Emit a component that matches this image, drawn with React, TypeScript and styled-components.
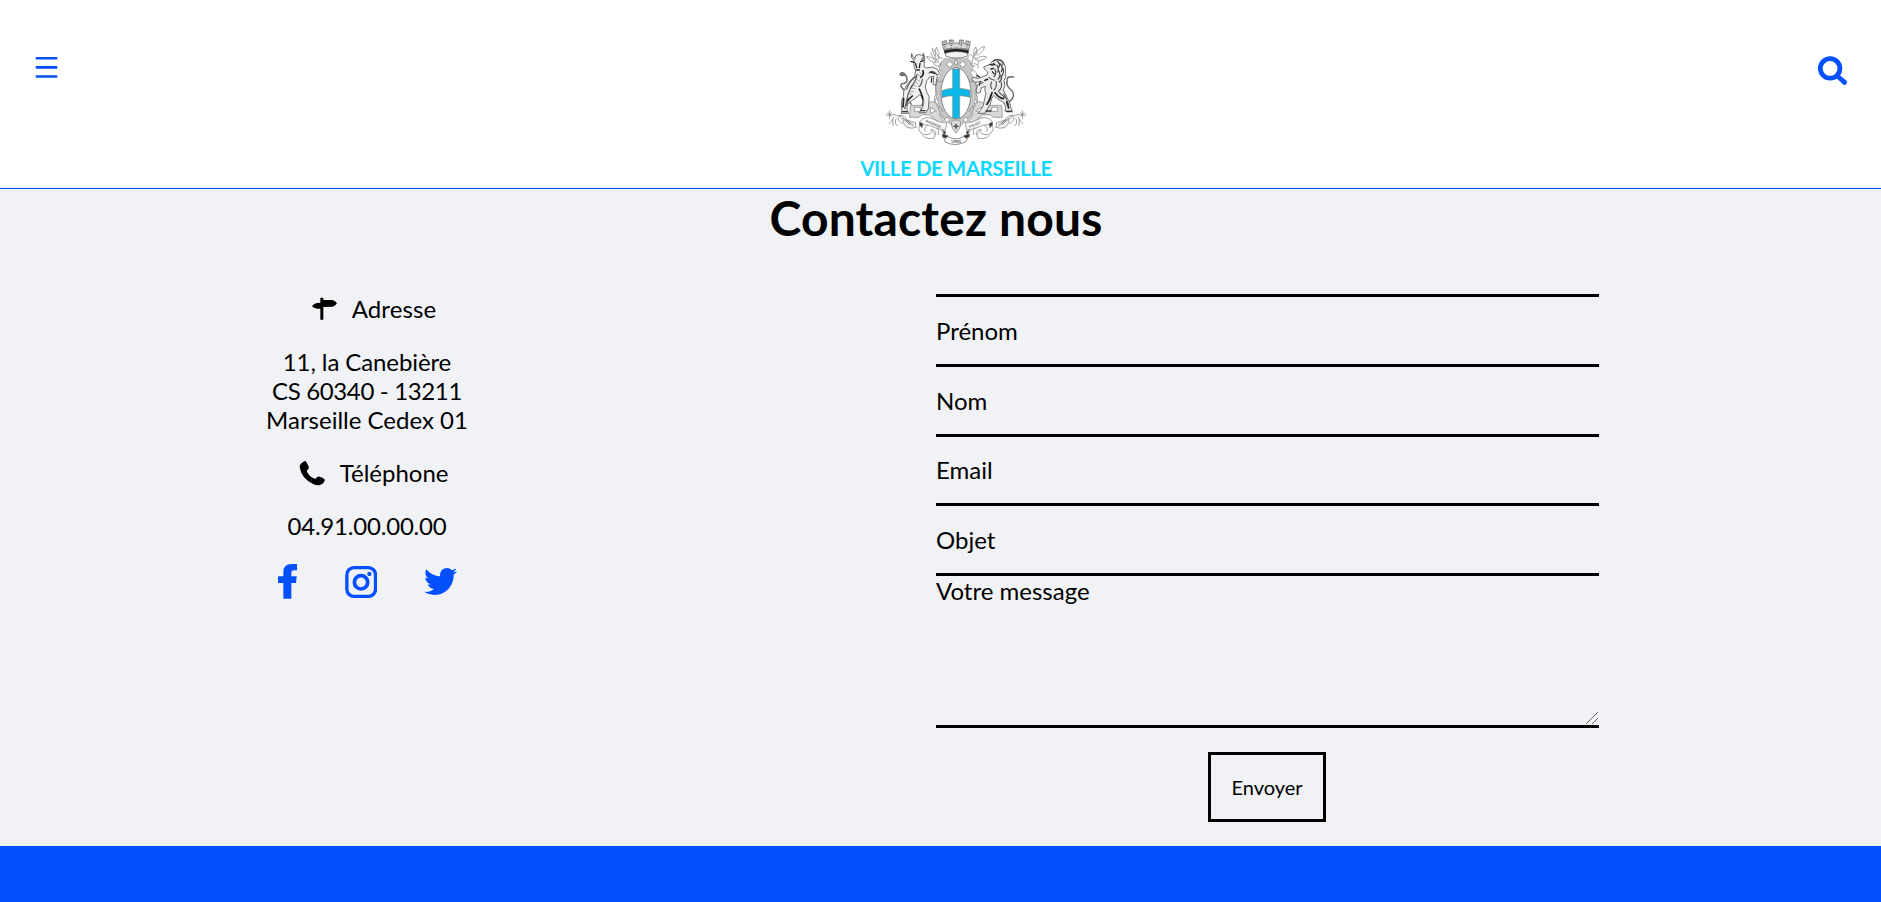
import React from "react";
import styled, { createGlobalStyle } from "styled-components";
import { FaTwitter } from "react-icons/fa";

const BLUE = "#0450ff";

const GlobalStyle = createGlobalStyle`
  * { box-sizing: border-box; }
  body { margin: 0; background: #f0f2f6; color: #000; font-family: Lato, "Liberation Sans", sans-serif; overflow: hidden; }
  svg { display: block; }
`;

const Page = styled.div`
  display: flex;
  flex-direction: column;
  height: 902px;
`;

const Header = styled.header`
  display: flex;
  justify-content: space-between;
  height: 189px;
  padding: 38px 33px 0 35px;
  background: #fff;
  border-bottom: 1px solid ${BLUE};
`;

const IconButton = styled.button<{ $top: number }>`
  align-self: flex-start;
  margin: ${(p) => p.$top}px 0 0;
  padding: 0;
  border: 0;
  background: none;
  cursor: pointer;
`;

const Brand = styled.div`
  display: flex;
  flex-direction: column;
  align-items: center;
  margin-left: 36px;
`;

const BrandName = styled.span`
  margin-top: 10px;
  font-size: 20.5px;
  font-weight: 700;
  line-height: 24px;
  letter-spacing: -0.46px;
  white-space: nowrap;
  color: #0bd8ff;
`;

const Main = styled.main`
  width: 1872px;
  flex: 1;
`;

const Title = styled.h1`
  margin: 0;
  height: 105px;
  font-size: 48px;
  font-weight: 700;
  line-height: 58px;
  letter-spacing: 0.16px;
  text-align: center;
`;

const Columns = styled.div`
  display: grid;
  grid-template-columns: 734px 663px;
  column-gap: 202px;
`;

const Info = styled.section`
  display: flex;
  flex-direction: column;
  align-items: center;
  gap: 24px;
  font-size: 24px;
  line-height: 29px;
  text-align: center;
`;

const InfoHeading = styled.div`
  display: flex;
  align-items: center;
  gap: 15px;
  margin-left: 14px;
`;

const Text = styled.p`
  margin: 0;
`;

const Line = styled.span<{ $tracking?: number }>`
  display: block;
  letter-spacing: ${(p) => p.$tracking ?? 0}px;
`;

const Socials = styled.nav`
  display: flex;
  align-items: center;
  gap: 47.5px;
  margin-left: 1px;
`;

const SocialLink = styled.a`
  color: ${BLUE};
`;

const Form = styled.form`
  display: flex;
  flex-direction: column;
  border-top: 3px solid #000;
`;

const Input = styled.input`
  height: 69.75px;
  padding: 0;
  border: 0;
  border-bottom: 3px solid #000;
  border-radius: 0;
  outline: 0;
  background: transparent;
  font: 24px Lato, sans-serif;
  &::placeholder { color: #000; opacity: 1; }
`;

const MessageBox = styled.div`
  position: relative;
  display: flex;
  height: 152px;
  border-bottom: 3px solid #000;
`;

const Message = styled.textarea`
  flex: 1;
  padding: 0;
  border: 0;
  outline: 0;
  background: transparent;
  font: 24px Lato, sans-serif;
  resize: none;
  &::placeholder { color: #000; opacity: 1; }
`;

const Grip = styled.svg`
  position: absolute;
  right: 1px;
  bottom: 1px;
`;

const Submit = styled.button`
  align-self: center;
  width: 118px;
  height: 70px;
  margin: 24px 1px 0 0;
  padding: 0;
  border: 3px solid #000;
  background: transparent;
  color: #000;
  font: 20px Lato, sans-serif;
`;

const Footer = styled.footer`
  height: 56px;
  background: ${BLUE};
`;

const Flourish = () => (
  <g fill="none" stroke="#8b8b8b" strokeWidth="2.4">
    <path d="M278 88q-18-10-26 4t8 18q14 2 12-10M270 122q-22 6-14 24t22 8M262 150q-10 22-4 40M262 192q-16 12-6 28M257 208q-14 22 12 24l10 16" />
    <path d="M180 228h45l20-12 13 6 12 30 14 18-15 13-32-26-22-1-10 8h-27z" fill="#d8d8d8" />
    <path d="M192 234h18v12h-18zM240 234l18 10-18 8zM265 252l10 18" fill="#fff" />
    <path d="M106 256h24m-12-13v27m-6-21 12 13m0-13-12 13M128 255l24 7M130 263q-6 18-15 20m13-15 0 22m10-24q-8 20 5 23m0-27q2 18 15 20" />
    <path d="M147 257q18 2 22 15l26 8 3 14q-26 8-36-8-2-15-15-29z" fill="#eee" />
    <path d="M208 277q17-19 38-9 22 13 43 13l-4 21q-26-1-47-14-16-4-29 1z" fill="#fafafa" />
    <path d="M208 288q-9 20 14 28 25 1 20-16 18 15 9 27-25 4-35-10M232 287q-13 8-8 20M246 301q15 4 9 16M260 293q9 13 3 24M273 302l9 13" />
    <path d="M166 269l23 20M157 266l22 20" strokeWidth="3" stroke="#777" />
    <path d="m278 302 9 6-6 11z" fill="#333" />
    <path d="m208 278 10 5-3 12-8-9z" fill="#333" />
  </g>
);

const Bull = () => (
  <g strokeLinejoin="round" strokeLinecap="round">
    <path d="M183 224q-16-12-15-28-4-14-14-22-6-8 2-11 16 0 14-16-2-11-18-15M150 132q9-4 14 3-7 6-14 1z" fill="none" stroke="#6a6a6a" strokeWidth="4.5" />
    <path d="M190 96q-1 18 6 27l-3 18q-15 12-26 30-9 13-8 30l-5 14q-3 16 1 28l-3 9h23l-5-10q-2-12 5-22l19-12 14-12 11 12q4 12-1 22l-6 14-6 6h21l7-12 2-26q3-10-6-22l-5-17q1-20 13-30l12-2-2 24 8 3 5-29q-5-12-18-10l-8 2q6-8 16-4l12 10 5-5-9-14q-14-8-30-2l-8-4 1-16q4-13-4-17-13-6-20-2z" fill="#f0f0f0" stroke="#5a5a5a" strokeWidth="2.6" />
    <path d="M189 92q-10-8-5-19 1 11 11 14M213 90q11-6 5-19 9 12-2 22" fill="#ddd" stroke="#555" strokeWidth="2.6" />
    <path d="M182 97l11 2M211 97l8-3M196 103l3 12M209 102l-2 13M199 122h8" fill="none" stroke="#222" strokeWidth="4" />
    <path d="M196 142q-21 16-27 38M188 166q-14 20-17 38l-8 34M200 136q-2 18-19 38M216 150q-2 16-10 22M176 206l-8 22M217 200q2 16-2 28" fill="none" stroke="#555" strokeWidth="3.4" />
    <path d="M160 208l-2 25M186 200l-14 13M207 179q8 16 10 30M218 124q4 12-7 20" fill="none" stroke="#222" strokeWidth="5" />
    <path d="M240 128l14 5M244 146l-1 12M157 247h14M212 244h12" fill="none" stroke="#333" strokeWidth="4" />
    <path d="M198 150l10 5M193 158l10 5M188 167l10 4M182 176l12 2M178 186l12 1M173 194l12 0M207 128l7 5M203 136l10 4" fill="none" stroke="#888" strokeWidth="2" />
  </g>
);

const Lion = () => (
  <g strokeLinejoin="round" strokeLinecap="round">
    <path d="M462 222q18-2 26-18 6-15-12-28-10-12-5-22M470 150q2-10 20-7" fill="none" stroke="#6a6a6a" strokeWidth="4.5" />
    <path d="M420 104l8-10 14-4q16 0 19 12 8 12 4 26 5 14-4 26 6 16-2 28l10 20 10 20 3 15 4 8h-23l4-9-6-16-18-10-13-12-6 10-4 16-12 20-3 8h-22l8-11 8-12 4-22 4-14q-6-8-2-22l-12 4-3 14-9 3-4-9 5-17 17-6-6-3-18 2-11-8 4-7 15 3 14-5 13-5 2-9-7-6-5-8z" fill="#ececec" stroke="#5a5a5a" strokeWidth="2.6" />
    <path d="M428 96q8-8 16-4 14 2 14 14M441 96q10 8 5 17M450 104q10 12 3 22M440 108q7 12 2 20M457 116q6 14-3 24M446 126q7 14-3 24M434 120q6 12-3 22M452 140q4 12-6 18" fill="none" stroke="#444" strokeWidth="3.6" />
    <path d="M419 106l9 1M422 119l8-2M429 103l5 3M426 127l5 6" fill="none" stroke="#222" strokeWidth="4" />
    <path d="M452 158q6 18-8 28M437 156q4 16-6 26M416 144q8 8 16 8M424 158q-6 12 0 20M460 194q8 12 15 32M447 190l16 14M421 196l-6 18-7 12" fill="none" stroke="#555" strokeWidth="3.4" />
    <path d="M434 190q12 16 26 18M425 190q-4 20-14 34M469 218l6 18M412 150l-8 3" fill="none" stroke="#222" strokeWidth="5" />
    <path d="M380 138l8 5M390 157l-3 10M407 245h15M469 247h15" fill="none" stroke="#333" strokeWidth="4" />
  </g>
);

const Crest = () => (
  <svg width="142" height="108" viewBox="104 26 426 324">
    <defs>
      <pattern id="hatch" width="5" height="5" patternUnits="userSpaceOnUse">
        <rect width="5" height="5" fill="#dedede" />
        <path d="M0 0 5 5M5 0 0 5" stroke="#a4a4a4" strokeWidth="1" />
      </pattern>
    </defs>

    <path
      d="M282 88Q256 110 273 130L258 158Q250 195 265 222L238 232 283 270 302 286 317 310 333 286 354 270 398 232 371 222Q386 195 376 158L361 130Q378 110 352 88Z"
      fill="url(#hatch)"
      stroke="#999"
      strokeWidth="2"
    />
    <Flourish />
    <g transform="translate(634 0) scale(-1 1)"><Flourish /></g>

    <ellipse cx="317" cy="192" rx="45" ry="77" fill="#fff" stroke="#858585" strokeWidth="3" />
    <path d="M307 119h21v58q16 1 31 6v21q-16-5-31-5v68h-21v-68q-16 0-32 6v-21q16-6 32-7z" fill="#08b8ea" stroke="#8c8880" strokeWidth="2" />

    <g fill="#fff" stroke="#8a8a8a" strokeWidth="2.4">
      <circle cx="298" cy="105" r="8" /><circle cx="337" cy="105" r="8" />
      <circle cx="290" cy="271" r="7" /><circle cx="346" cy="271" r="7" />
      <path d="M317 89q-7 8-4 18h9q3-10-5-18zM303 278q14-12 28 0l-3 19-11 14-11-14z" fill="#dedede" />
      <path d="m317 281 3 7 7 3-7 3-3 8-3-8-7-3 7-3z" fill="#555" stroke="none" />
    </g>

    <g stroke="#555" strokeWidth="2">
      <path d="M281 60q36-12 74 0l-5 21q-31 10-63 0z" fill="#f2f2f2" />
      <path d="M282 63q35-9 72 0v9q-36-11-71 0z" fill="#1c1c1c" />
      <path d="M275 38l13-5 1 10 8-2v-9h12v9h18v-9h12v9l7 2 1-9 13 4-4 22q-38-8-77 0z" fill="#d8d8d8" />
      <path d="M281 37l4 20M302 32l1 23M333 32l-1 23M354 36l-5 22M277 46l13-2m7 0h14m14 0h14m7 1 13 3" strokeDasharray="4 3" stroke="#444" strokeWidth="2.5" />
    </g>

    <g fill="#fff" stroke="#969696" strokeWidth="2.5">
      <path d="M266 102q-10-17-38-21 10 18 31 19M262 96q-13-20-17-39 20 17 21 36M256 82q-4-14 2-29 11 17 7 34M240 69l17 31" />
      <path d="M365 103q2-26 15-42M371 82q-5-16 5-29 9 15-3 27M376 74q10-20 27-22-5 19-24 26M374 91q18-15 35-8-12 15-35 8M363 97q-15-5-9-17t18 8M370 103q16 0 13 16" />
    </g>

    <Bull />
    <Lion />

    <g stroke="#777" strokeWidth="2.5">
      <path d="M279 319l14 3q24 14 48-1l14-2-7 17q-31 18-64 2z" fill="#fff" />
      <path d="M276 314l17 5-6 8-11-5zM357 314l-17 5 6 8 11-5z" fill="#292929" />
    </g>
    <g fill="#555" fontFamily="Lato, sans-serif" fontSize="11" fontWeight="700">
      <text x="302" y="340">VIRES</text>
      <text transform="translate(225 278) rotate(22)" fontSize="10">IMMENSIS</text>
      <text transform="translate(358 296) rotate(-22)" fontSize="10">FVLGET</text>
    </g>
  </svg>
);

const MenuIcon = () => (
  <svg width="23" height="22" viewBox="0 0 23 22" fill={BLUE}>
    <path d="M.7 0h21.6v2.6H.7zM.7 9.1h21.6v2.6H.7zM.7 18.2h21.6v2.6H.7z" />
  </svg>
);

const SearchIcon = () => (
  <svg width="30" height="30" viewBox="0 0 30 30" fill="none" stroke={BLUE}>
    <circle cx="12.1" cy="12.4" r="9.8" strokeWidth="4.8" />
    <path d="m19.3 20 7.5 6.6" strokeWidth="4.6" />
    <path d="m25.6 25.5 1 .9" strokeWidth="4.8" strokeLinecap="round" />
  </svg>
);

const SignIcon = () => (
  <svg width="25" height="24" viewBox="186 53 75 72">
    <path d="M211 55h9v7h28q10 4 13 10-4 7-13 10l-28 1v38h-9V88q-18 2-25-8 7-10 25-10z" />
  </svg>
);

const PhoneIcon = () => (
  <svg width="25.3" height="25" viewBox="148 543 76 75" overflow="visible">
    <path d="M167 545q5 5 11 20 0 5-7 10 5 17 26 25 7-9 13-7 9 2 16 9-4 13-15 16-9 2-22-4-34-16-39-50-1-11 17-19z" />
  </svg>
);

const FacebookIcon = () => (
  <svg width="19.4" height="35" viewBox="83 851 58 105">
    <path fill={BLUE} d="M99 955v-47H83v-20h16v-13q0-24 25-24h17v19h-11q-7 0-7 8v10h16l-2 20h-14v47z" />
  </svg>
);

const InstagramIcon = () => (
  <svg width="32.4" height="33" viewBox="284 855 97 99" fill="none" stroke={BLUE}>
    <rect x="289.5" y="863" width="86" height="86" rx="21" strokeWidth="10" />
    <circle cx="332" cy="907" r="20" strokeWidth="11" />
    <circle cx="357" cy="882" r="6.5" fill={BLUE} stroke="none" />
  </svg>
);

const FIELDS = ["Prénom", "Nom", "Email", "Objet"];

export default function App() {
  return (
    <Page>
      <GlobalStyle />
      <Header>
        <IconButton $top={19} aria-label="Menu"><MenuIcon /></IconButton>
        <Brand>
          <Crest />
          <BrandName>VILLE DE MARSEILLE</BrandName>
        </Brand>
        <IconButton $top={18} aria-label="Rechercher"><SearchIcon /></IconButton>
      </Header>
      <Main>
        <Title>Contactez nous</Title>
        <Columns>
          <Info>
            <InfoHeading><SignIcon /><Line $tracking={0.1}>Adresse</Line></InfoHeading>
            <Text>
              <Line $tracking={-0.1}>11, la Canebière</Line>
              <Line $tracking={-0.35}>CS 60340 - 13211</Line>
              <Line>Marseille Cedex 01</Line>
            </Text>
            <InfoHeading><PhoneIcon /><Line>Téléphone</Line></InfoHeading>
            <Text><Line $tracking={-0.2}>04.91.00.00.00</Line></Text>
            <Socials>
              <SocialLink aria-label="Facebook"><FacebookIcon /></SocialLink>
              <SocialLink aria-label="Instagram"><InstagramIcon /></SocialLink>
              <SocialLink aria-label="Twitter"><FaTwitter size={33} /></SocialLink>
            </Socials>
          </Info>
          <Form>
            {FIELDS.map((name) => <Input key={name} placeholder={name} />)}
            <MessageBox>
              <Message placeholder="Votre message" />
              <Grip width="12" height="12" viewBox="0 0 12 12" stroke="#444" strokeWidth=".8">
                <path d="M0 12 12 0M6 12l6-6" />
              </Grip>
            </MessageBox>
            <Submit type="button">Envoyer</Submit>
          </Form>
        </Columns>
      </Main>
      <Footer />
    </Page>
  );
}
